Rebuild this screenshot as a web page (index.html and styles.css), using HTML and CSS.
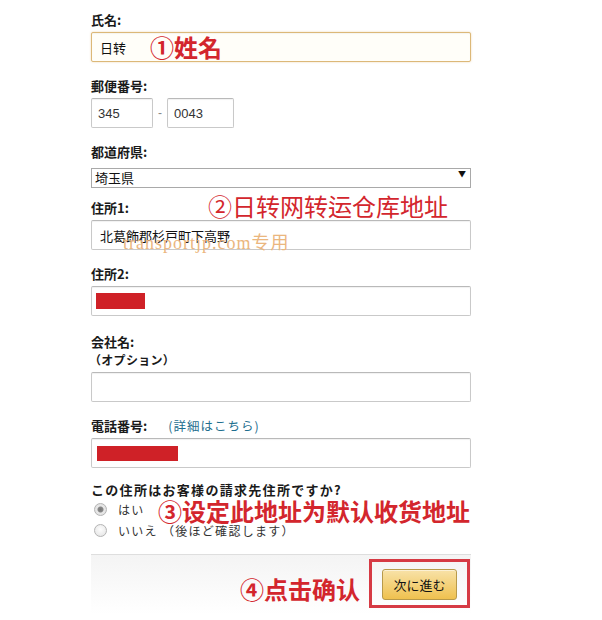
FILE: index.html
```html
<!DOCTYPE html>
<html lang="ja">
<head>
<meta charset="utf-8">
<title>住所の入力</title>
<link rel="stylesheet" href="styles.css">
</head>
<body>
<form class="form">
  <div class="field">
    <div class="label">氏名:</div>
    <input class="box box-focus" type="text" value="日转">
  </div>
  <div class="field">
    <div class="label">郵便番号:</div>
    <div class="zip">
      <input class="box zip1" type="text" value="345">
      <span class="dash">-</span>
      <input class="box zip2" type="text" value="0043">
    </div>
  </div>
  <div class="field">
    <div class="label">都道府県:</div>
    <div class="select-wrap">
      <select class="select"><option>埼玉県</option></select>
    </div>
  </div>
  <div class="field">
    <div class="label">住所1:</div>
    <input class="box" type="text" value="北葛飾郡杉戸町下高野">
  </div>
  <div class="field">
    <div class="label">住所2:</div>
    <div class="box box-div"><span class="redact redact-a"></span></div>
  </div>
  <div class="field field-company">
    <div class="label">会社名:</div>
    <div class="label sub">（オプション）</div>
    <input class="box" type="text" value="">
  </div>
  <div class="field field-phone">
    <div class="label">電話番号: <a class="link" href="#">(詳細はこちら)</a></div>
    <div class="box box-div"><span class="redact redact-b"></span></div>
  </div>
  <div class="question">この住所はお客様の請求先住所ですか?</div>
  <label class="radio-row"><input class="radio" type="radio" name="bill" checked><span class="radio-text">はい</span></label>
  <label class="radio-row"><input class="radio" type="radio" name="bill"><span class="radio-text">いいえ （後ほど確認します）</span></label>
  <div class="band">
    <button class="btn" type="button">次に進む</button>
  </div>

  <div class="note note1">①姓名</div>
  <div class="note note2">②日转网转运仓库地址</div>
  <div class="watermark">transportjp.com专用</div>
  <div class="note note3">③设定此地址为默认收货地址</div>
  <div class="note note4">④点击确认</div>
  <div class="redbox"></div>
</form>
</body>
</html>
```

FILE: styles.css
```css
html, body {
  margin: 0;
  padding: 0;
  background: #fff;
}
body {
  width: 602px;
  height: 620px;
  overflow: hidden;
  font-family: "Noto Sans CJK JP", "Liberation Sans", sans-serif;
  color: #111;
}
.form {
  position: relative;
  width: 380px;
  margin: 0 0 0 91px;
  padding-top: 11px;
}
.field {
  margin-bottom: 15px;
}
.field-company {
  padding-top: 2px;
}
.field-phone {
  margin-bottom: 13px;
}
.label {
  font-size: 13px;
  font-weight: bold;
  line-height: 18px;
  margin-bottom: 3px;
  color: #1a1a1a;
}
.label.sub {
  font-size: 12px;
  letter-spacing: 0.3px;
  margin-left: -2px;
}
.label + .label.sub {
  margin-top: -3px;
}
.link {
  margin-left: 18px;
  font-weight: normal;
  font-size: 12.5px;
  letter-spacing: 1px;
  color: #1f6f8f;
  text-decoration: none;
}
.box {
  display: block;
  box-sizing: border-box;
  width: 380px;
  height: 30px;
  margin: 0;
  padding: 0 8px;
  border: 1px solid #c9c9c9;
  border-top-color: #b9b9b9;
  border-radius: 2px;
  box-shadow: inset 0 1px 1px rgba(0,0,0,0.06);
  background: #fff;
  font-family: "Noto Sans CJK JP", "Liberation Sans", sans-serif;
  font-size: 13px;
  color: #111;
  outline: none;
}
.box-focus {
  border-color: #dcb878;
  background: #fffef9;
  box-shadow: 0 0 2px rgba(220,170,90,0.5), inset 0 1px 1px rgba(0,0,0,0.04);
}
.box-div {
  display: flex;
  align-items: center;
  padding: 0 0 0 4px;
}
.redact {
  display: block;
  background: #cf2127;
}
.redact-a {
  width: 49px;
  height: 16px;
}
.redact-b {
  width: 81px;
  height: 15px;
  margin-left: 1px;
}
.zip {
  display: flex;
  align-items: center;
}
.zip .box {
  padding-left: 6px;
  font-family: "Liberation Sans", sans-serif;
  color: #333;
}
.zip1 {
  width: 62px !important;
}
.zip2 {
  width: 67px !important;
}
.dash {
  width: 14px;
  text-align: center;
  font-family: "Liberation Sans", sans-serif;
  font-size: 12px;
  color: #888;
}
.select-wrap {
  position: relative;
  width: 380px;
  height: 20px;
}
.select {
  -webkit-appearance: none;
  appearance: none;
  box-sizing: border-box;
  width: 380px;
  height: 20px;
  margin: 0;
  padding: 0 0 0 3px;
  border: 1px solid #a9a9a9;
  border-radius: 0;
  background: #fff;
  font-family: "Noto Sans CJK JP", sans-serif;
  font-size: 13px;
  line-height: 18px;
  color: #111;
}
.select-wrap::after {
  content: "▼";
  position: absolute;
  right: 5px;
  top: 5px;
  font-size: 8px;
  line-height: 10px;
  color: #111;
  pointer-events: none;
}
.question {
  font-size: 13px;
  font-weight: bold;
  line-height: 18px;
  letter-spacing: 1.3px;
  color: #1a1a1a;
}
.radio-row {
  display: flex;
  align-items: center;
  height: 21px;
  padding-left: 3px;
}
.radio {
  -webkit-appearance: none;
  appearance: none;
  box-sizing: border-box;
  width: 13px;
  height: 13px;
  margin: 0 11px 0 0;
  border: 1px solid #b4b4b4;
  border-radius: 50%;
  background: radial-gradient(circle at 50% 40%, #fdfdfd, #e2e2e2);
}
.radio:checked {
  background: radial-gradient(circle, #777 0, #888 2.5px, #e8e8e8 3.5px, #dcdcdc 100%);
}
.radio-text {
  font-size: 12px;
  letter-spacing: 1.3px;
  color: #333;
  white-space: pre;
}
.band {
  display: flex;
  justify-content: flex-end;
  margin-top: 13px;
  height: 60px;
  box-sizing: border-box;
  padding: 14px 14px 0 0;
  border-top: 1px solid #dedede;
  background: linear-gradient(#f4f4f4, #fff);
}
.btn {
  width: 75px;
  height: 31px;
  padding: 0;
  border: 1px solid #b89a4a;
  border-radius: 3px;
  background: linear-gradient(#f8e2a8, #efc14f);
  box-shadow: inset 0 1px 0 rgba(255,255,255,0.5);
  font-family: "Noto Sans CJK JP", sans-serif;
  font-size: 13px;
  color: #111;
}
.note {
  position: absolute;
  font-family: "Noto Sans CJK SC", sans-serif;
  font-size: 24px;
  line-height: 24px;
  font-weight: bold;
  color: #d3262d;
  white-space: nowrap;
}
.note1 {
  left: 59px;
  top: 35px;
}
.note2 {
  left: 117px;
  top: 194px;
  font-weight: normal;
}
.note3 {
  left: 67px;
  top: 500px;
  line-height: 21px;
}
.note4 {
  left: 149px;
  top: 577px;
}
.watermark {
  position: absolute;
  left: 32px;
  top: 234px;
  font-family: "Liberation Serif", "Noto Sans CJK SC", serif;
  font-size: 18px;
  line-height: 18px;
  letter-spacing: 1px;
  color: #ebb67e;
  white-space: nowrap;
}
.redbox {
  position: absolute;
  left: 278px;
  top: 559px;
  width: 101px;
  height: 49px;
  box-sizing: border-box;
  border: 3px solid #d63a44;
}
```
